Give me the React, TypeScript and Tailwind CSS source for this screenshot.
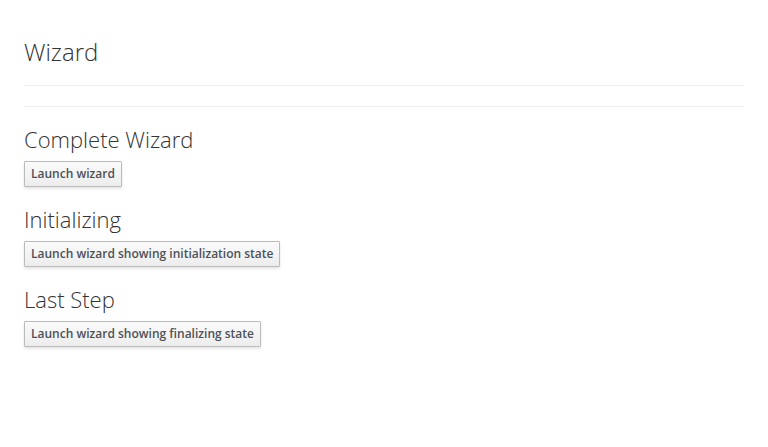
export default function App() {
  const sections = [
    { title: "Complete Wizard", label: "Launch wizard" },
    { title: "Initializing", label: "Launch wizard showing initialization state" },
    { title: "Last Step", label: "Launch wizard showing finalizing state" },
  ];

  return (
    <div className="min-h-screen bg-white px-6 text-[#333] [font-family:'Open_Sans',sans-serif]">
      <div className="border-b border-[#ededed] pt-[39px] pb-5">
        <h1 className="text-2xl leading-[26px] font-light">Wizard</h1>
      </div>
      <hr className="mt-5 border-t border-[#ededed]" />
      {sections.map((s) => (
        <div key={s.title} className="mt-[20px]">
          <h2 className="text-[22px] leading-[24px] font-light">{s.title}</h2>
          <button
            type="button"
            className="mt-[10px] h-[26px] rounded-[1px] border border-[#bbb] bg-gradient-to-b from-[#fafafa] to-[#ededed] px-[6px] text-xs font-semibold text-[#4d5258] shadow-[0_2px_3px_rgba(3,3,3,0.1)]"
          >
            {s.label}
          </button>
        </div>
      ))}
    </div>
  );
}
